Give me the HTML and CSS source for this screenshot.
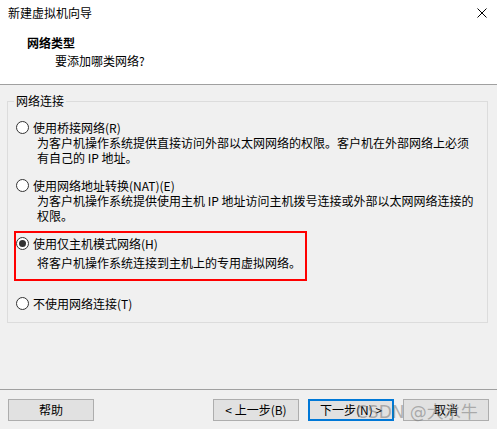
FILE: index.html
```html
<!DOCTYPE html>
<html lang="zh-CN">
<head>
<meta charset="utf-8">
<title>新建虚拟机向导</title>
<link rel="stylesheet" href="styles.css">
</head>
<body>
<div class="window">
  <div class="header">
    <div class="titlebar">
      <span class="title">新建虚拟机向导</span>
      <svg class="close" width="10" height="10" viewBox="0 0 10 10"><path d="M0.5 0.5 L9.5 9.5 M9.5 0.5 L0.5 9.5" stroke="#000" stroke-width="1" fill="none"/></svg>
    </div>
    <div class="heading">
      <div class="heading-title">网络类型</div>
      <div class="heading-sub">要添加哪类网络?</div>
    </div>
  </div>

  <div class="content">
    <fieldset class="group">
      <legend class="legend">网络连接</legend>

      <div class="option opt-first">
        <div class="opt-label"><span class="radio"></span><span>使用桥接网络(R)</span></div>
        <div class="opt-desc">为客户机操作系统提供直接访问外部以太网网络的权限。客户机在外部网络上必须<br>有自己的 IP 地址。</div>
      </div>

      <div class="option">
        <div class="opt-label"><span class="radio"></span><span>使用网络地址转换(NAT)(E)</span></div>
        <div class="opt-desc">为客户机操作系统提供使用主机 IP 地址访问主机拨号连接或外部以太网网络连接的<br>权限。</div>
      </div>

      <div class="highlight">
        <div class="option">
          <div class="opt-label"><span class="radio checked"></span><span>使用仅主机模式网络(H)</span></div>
          <div class="opt-desc desc-inbox">将客户机操作系统连接到主机上的专用虚拟网络。</div>
        </div>
      </div>

      <div class="option opt-last">
        <div class="opt-label"><span class="radio"></span><span>不使用网络连接(T)</span></div>
      </div>
    </fieldset>
  </div>

  <div class="footer">
    <button class="btn">帮助</button>
    <div class="nav">
      <button class="btn">&lt; 上一步(B)</button>
      <button class="btn btn-default">下一步(N) &gt;</button>
      <button class="btn">取消</button>
    </div>
  </div>

  <div class="watermark">CSDN @大水牛</div>
</div>
</body>
</html>
```

FILE: styles.css
```css
* { box-sizing: border-box; }

html, body {
  margin: 0;
  padding: 0;
  background: #f0f0f0;
}

body {
  font-family: "Noto Sans CJK SC", "Microsoft YaHei", "DejaVu Sans", sans-serif;
  font-size: 12px;
  color: #000;
}

.window {
  position: relative;
  width: 497px;
  height: 429px;
  display: flex;
  flex-direction: column;
  overflow: hidden;
}

/* Header */
.header {
  background: #fff;
  height: 85px;
  border-bottom: 1px solid #a0a0a0;
  flex: none;
}

.titlebar {
  height: 26px;
  display: flex;
  align-items: center;
  justify-content: space-between;
  padding: 0 10px 0 8px;
}

.title {
  line-height: 16px;
  color: #000;
}

.close {
  display: block;
}

.heading {
  padding-left: 27px;
}

.heading-title {
  font-weight: bold;
  line-height: 16px;
  margin-top: 9px;
}

.heading-sub {
  padding-left: 28px;
  line-height: 16px;
  margin-top: 2px;
}

/* Group box */
.content {
  padding: 0 9px 0 7px;
  flex: none;
}

.group {
  margin: 8px 0 0 0;
  border: 1px solid #dcdcdc;
  padding: 0 0 11px 8px;
  min-width: 0;
}

.legend {
  padding: 0 2px;
  margin-left: -2px;
  line-height: 16px;
  color: #000;
}

.option {
  display: flex;
  flex-direction: column;
}

.opt-first { margin-top: 11px; }
.option + .option { margin-top: 13px; }
.opt-last { margin-top: 15px; }

.opt-label {
  display: flex;
  align-items: center;
  gap: 4px;
  height: 15px;
  line-height: 15px;
}

.radio {
  width: 13px;
  height: 13px;
  border: 1px solid #333;
  border-radius: 50%;
  background: #fff;
  flex: none;
  display: flex;
  align-items: center;
  justify-content: center;
}

.radio.checked::after {
  content: "";
  width: 7px;
  height: 7px;
  border-radius: 50%;
  background: #333;
}

.opt-desc {
  padding-left: 21px;
  line-height: 15px;
  white-space: nowrap;
}

.desc-inbox {
  margin-top: 4px;
}

.highlight {
  width: 293px;
  margin: 8px 0 0 -2px;
  border: 2px solid #ff0000;
  padding: 3px 0 9px 0;
}

/* Footer */
.footer {
  margin-top: auto;
  border-top: 1px solid #a0a0a0;
  display: flex;
  justify-content: space-between;
  padding: 9px 8px 8px 8px;
  flex: none;
}

.nav {
  display: flex;
  gap: 9px;
}

.btn {
  width: 86px;
  height: 22px;
  background: #e1e1e1;
  border: 1px solid #adadad;
  font-family: inherit;
  font-size: 12px;
  color: #000;
  padding: 0;
  line-height: 18px;
  margin: 0;
}

.btn-default {
  border: 2px solid #0078d7;
}

.watermark {
  position: absolute;
  left: 356px;
  top: 401px;
  font-family: "DejaVu Sans", "Noto Sans CJK SC", sans-serif;
  font-size: 17px;
  line-height: 22px;
  color: rgba(120, 120, 120, 0.55);
  pointer-events: none;
  white-space: nowrap;
}
```
